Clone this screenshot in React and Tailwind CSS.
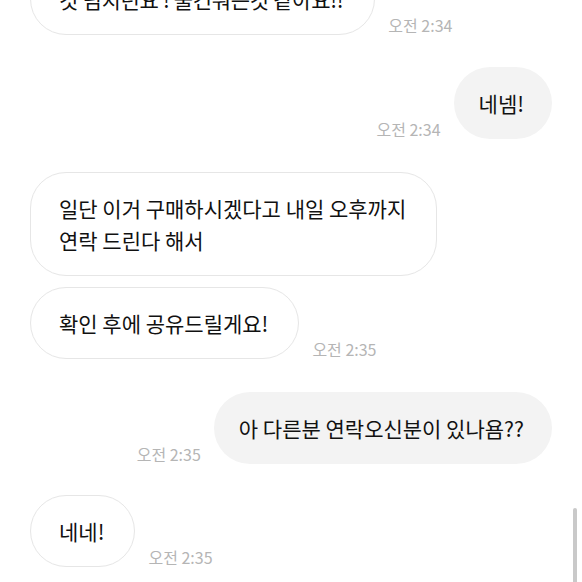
import React from "react";

const messages = [
  { id: 1, mine: false, lines: ["것 넘치던요 ! 물건뭐든것 같아요!!"], time: "오전 2:34", gap: "mt-0" },
  { id: 2, mine: true, lines: ["네넴!"], time: "오전 2:34", gap: "mt-8" },
  { id: 3, mine: false, lines: ["일단 이거 구매하시겠다고 내일 오후까지", "연락 드린다 해서"], time: null, gap: "mt-[33px]" },
  { id: 4, mine: false, lines: ["확인 후에 공유드릴게요!"], time: "오전 2:35", gap: "mt-[11px]" },
  { id: 5, mine: true, lines: ["아 다른분 연락오신분이 있나욤??"], time: "오전 2:35", gap: "mt-[33px]" },
  { id: 6, mine: false, lines: ["네네!"], time: "오전 2:35", gap: "mt-[31px]" },
];

const Bubble = ({ mine, lines, first }) => (
  <div
    className={
      mine
        ? "rounded-[36px] bg-[#f3f3f3] pl-[25px] pr-[28px] py-5 text-[21px] leading-8 text-[#111111] whitespace-nowrap"
        : `rounded-[36px] border border-[#e6e6e6] bg-white pl-[28px] py-[19px] text-[21px] leading-8 text-[#111111] whitespace-nowrap ${first ? "pr-[31px] tracking-[-0.3px]" : "pr-[30px]"}`
    }
  >
    {lines.map((l, i) => (
      <div key={i}>{l}</div>
    ))}
  </div>
);

const Time = ({ time }) => (
  <span className="text-[16px] leading-[20px] text-[#b5b5b5] whitespace-nowrap">{time}</span>
);

export default function App() {
  return (
    <div
      className="relative h-[582px] w-[582px] overflow-hidden bg-white"
      style={{ fontFamily: '"Noto Sans CJK KR", "Noto Sans", sans-serif' }}
    >
      {/* chat list, first bubble cut off at top */}
      <div className="-mt-[37px] flex flex-col pl-[30px] pr-[30px]">
        {messages.map((m) => (
          <div
            key={m.id}
            className={`${m.gap} flex items-end gap-[13px] ${m.mine ? "flex-row-reverse" : "flex-row"}`}
          >
            <Bubble mine={m.mine} lines={m.lines} first={m.id === 1} />
            {m.time && <Time time={m.time} />}
          </div>
        ))}
      </div>

      {/* scroll indicator */}
      <div className="absolute right-[5px] top-[508px] h-[90px] w-[4px] rounded-full bg-[#c9c9c9]" />
    </div>
  );
}
